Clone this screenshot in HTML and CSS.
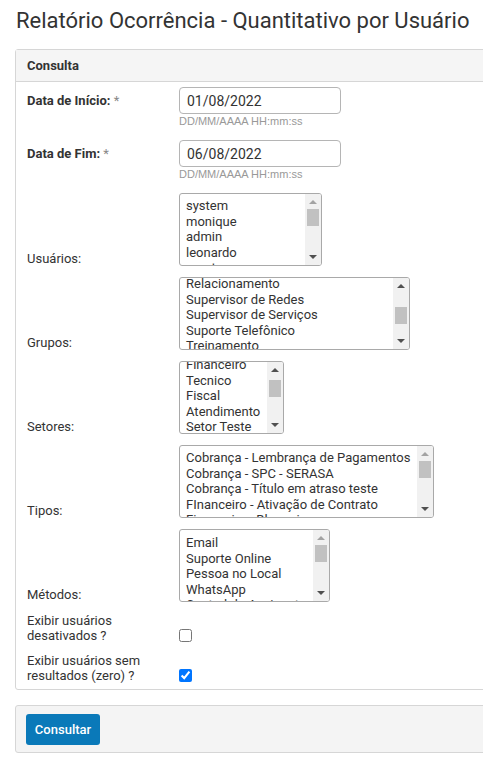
FILE: index.html
```html
<!DOCTYPE html>
<html lang="pt-BR">
<head>
<meta charset="utf-8">
<title>Relatório Ocorrência - Quantitativo por Usuário</title>
<link rel="stylesheet" href="styles.css">
</head>
<body>
<h1 class="title">Relatório Ocorrência - Quantitativo por Usuário</h1>

<div class="panel">
  <div class="panel-head">Consulta</div>
  <div class="panel-body">
    <div class="row row-date">
      <div class="lbl"><b>Data de Início:</b> <span class="req">*</span></div>
      <div class="ctl">
        <input class="txt" type="text" value="01/08/2022">
        <div class="help">DD/MM/AAAA HH:mm:ss</div>
      </div>
    </div>
    <div class="row row-date">
      <div class="lbl"><b>Data de Fim:</b> <span class="req">*</span></div>
      <div class="ctl">
        <input class="txt" type="text" value="06/08/2022">
        <div class="help">DD/MM/AAAA HH:mm:ss</div>
      </div>
    </div>

    <div class="row row-list">
      <div class="lbl">Usuários:</div>
      <div class="listbox lb-users">
        <div class="opts" style="margin-top:0px">
          <div>system</div><div>monique</div><div>admin</div><div>leonardo</div><div>renato</div>
        </div>
        <div class="sb">
          <span class="arr up off"></span>
          <span class="thumb" style="margin-top:0px"></span>
          <span class="fill"></span>
          <span class="arr down"></span>
        </div>
      </div>
    </div>

    <div class="row row-list">
      <div class="lbl">Grupos:</div>
      <div class="listbox lb-groups">
        <div class="opts" style="margin-top:-6px">
          <div>Relacionamento</div><div>Supervisor de Redes</div><div>Supervisor de Serviços</div><div>Suporte Telefônico</div><div>Treinamento</div>
        </div>
        <div class="sb">
          <span class="arr up"></span>
          <span class="thumb" style="margin-top:14px"></span>
          <span class="fill"></span>
          <span class="arr down"></span>
        </div>
      </div>
    </div>

    <div class="row row-list">
      <div class="lbl">Setores:</div>
      <div class="listbox lb-sectors">
        <div class="opts" style="margin-top:-9px">
          <div>Financeiro</div><div>Tecnico</div><div>Fiscal</div><div>Atendimento</div><div>Setor Teste</div>
        </div>
        <div class="sb">
          <span class="arr up"></span>
          <span class="thumb" style="margin-top:3px"></span>
          <span class="fill"></span>
          <span class="arr down"></span>
        </div>
      </div>
    </div>

    <div class="row row-list">
      <div class="lbl">Tipos:</div>
      <div class="listbox lb-types">
        <div class="opts" style="margin-top:0px">
          <div>Cobrança - Lembrança de Pagamentos</div><div>Cobrança - SPC - SERASA</div><div>Cobrança - Título em atraso teste</div><div>FInanceiro - Ativação de Contrato</div><div>Financeiro - Bloqueio</div>
        </div>
        <div class="sb">
          <span class="arr up off"></span>
          <span class="thumb" style="margin-top:0px"></span>
          <span class="fill"></span>
          <span class="arr down"></span>
        </div>
      </div>
    </div>

    <div class="row row-list">
      <div class="lbl">Métodos:</div>
      <div class="listbox lb-methods">
        <div class="opts" style="margin-top:1px">
          <div>Email</div><div>Suporte Online</div><div>Pessoa no Local</div><div>WhatsApp</div><div>Central do Assinante</div>
        </div>
        <div class="sb">
          <span class="arr up off"></span>
          <span class="thumb" style="margin-top:0px"></span>
          <span class="fill"></span>
          <span class="arr down"></span>
        </div>
      </div>
    </div>

    <div class="row row-check">
      <div class="lbl">Exibir usuários<br>desativados ?</div>
      <div class="ctl"><input class="chk" type="checkbox"></div>
    </div>
    <div class="row row-check">
      <div class="lbl">Exibir usuários sem<br>resultados (zero) ?</div>
      <div class="ctl"><input class="chk" type="checkbox" checked></div>
    </div>
  </div>
</div>

<div class="panel panel-foot">
  <button class="btn" type="button">Consultar</button>
</div>
</body>
</html>
```
FILE: styles.css
```css
html, body {
  margin: 0;
  padding: 0;
  overflow: hidden;
}
body {
  font-family: Roboto, "Liberation Sans", Arial, sans-serif;
  font-size: 13px;
  color: #333;
  background: #fff;
  width: 483px;
}
.title {
  margin: 8px 0 0 16px;
  font-size: 22px;
  line-height: 26px;
  font-weight: 400;
  color: #333;
  white-space: nowrap;
}
.panel {
  margin: 15px -20px 0 15px;
  border: 1px solid #d6d6d6;
  border-radius: 3px;
  background: #fff;
}
.panel-head {
  background: #f5f5f5;
  border-bottom: 1px solid #d6d6d6;
  height: 31px;
  line-height: 31px;
  padding-left: 11px;
  font-weight: 700;
  color: #333;
}
.panel-body {
  padding: 5px 0 6px 11px;
}
.row {
  display: flex;
}
.lbl {
  width: 152px;
  flex: none;
  line-height: 15px;
}
.req {
  color: #888;
}
.row-date {
  align-items: flex-start;
  margin-bottom: 12px;
}
.row-date .lbl {
  padding-top: 6px;
}
.txt {
  display: block;
  box-sizing: border-box;
  width: 162px;
  height: 27px;
  margin: 0;
  padding: 0 7px;
  border: 1px solid #b5b5b5;
  border-radius: 4px;
  font-family: Roboto, "Liberation Sans", Arial, sans-serif;
  font-size: 14px;
  color: #333;
  background: #fff;
  outline: none;
}
.help {
  font-family: "Liberation Sans", Arial, sans-serif;
  font-size: 11px;
  line-height: 13px;
  color: #999;
  margin-top: 1px;
}
.row-date + .row-date {
  margin-bottom: 12px;
}
.row-list {
  align-items: flex-end;
  margin-bottom: 11px;
}
.row-list .lbl {
  padding-bottom: 0;
}
.listbox {
  box-sizing: border-box;
  height: 73px;
  border: 1px solid #a9a9a9;
  border-radius: 3px;
  display: flex;
  overflow: hidden;
  background: #fff;
}
.lb-users { width: 143px; }
.lb-groups { width: 231px; }
.lb-sectors { width: 105px; }
.lb-types { width: 255px; }
.lb-methods { width: 151px; }
.opts {
  flex: 1;
  padding: 4px 6px 0 6px;
  line-height: 15.6px;
  white-space: nowrap;
  overflow: hidden;
  color: #333;
}
.sb {
  flex: none;
  width: 16px;
  background: #f1f1f1;
  display: flex;
  flex-direction: column;
  align-items: center;
}
.arr {
  flex: none;
  width: 0;
  height: 0;
  border-left: 4px solid transparent;
  border-right: 4px solid transparent;
}
.arr.up {
  border-bottom: 4px solid #505050;
  margin-top: 6px;
}
.arr.up.off {
  border-bottom-color: #a3a3a3;
}
.arr.down {
  border-top: 4px solid #505050;
  margin-bottom: 6px;
}
.thumb {
  flex: none;
  display: block;
  width: 12px;
  height: 17px;
  background: #c1c1c1;
  position: relative;
  top: 5px;
}
.fill {
  flex: 1;
}
.row-check {
  align-items: flex-end;
  margin-bottom: 10px;
}
.row-check:last-child {
  margin-bottom: 0;
}
.chk {
  display: block;
  width: 13px;
  height: 13px;
  margin: 0 0 1px 0;
}
.panel-foot {
  margin-top: 15px;
  background: #f4f4f4;
  padding: 8px 0 7px 10px;
}
.btn {
  display: block;
  width: 74px;
  height: 31px;
  border: none;
  border-radius: 3px;
  background: #0a79b9;
  color: #fff;
  font-family: Roboto, "Liberation Sans", Arial, sans-serif;
  font-size: 13px;
  font-weight: 500;
  padding: 0;
}
```
